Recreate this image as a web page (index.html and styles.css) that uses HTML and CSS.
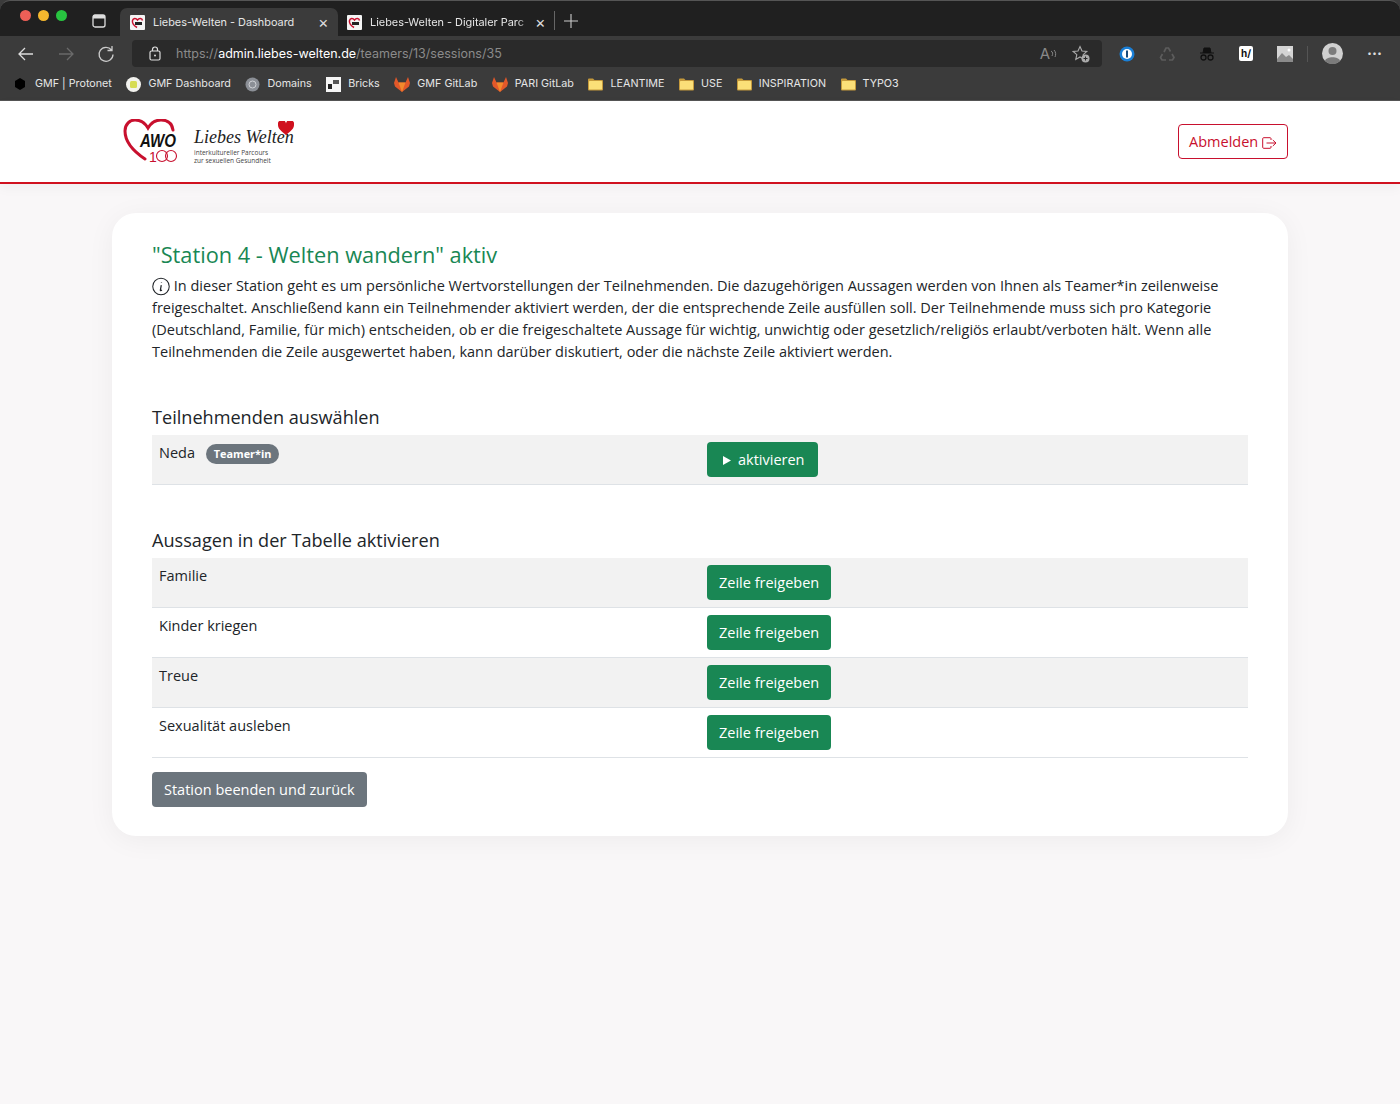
FILE: index.html
```html
<!DOCTYPE html>
<html lang="de">
<head>
    <meta charset="UTF-8">
    <meta name="viewport" content="width=device-width, initial-scale=1.0">
    <title>Liebes-Welten - Dashboard</title>
    <link rel="stylesheet" href="styles.css">
</head>
<body>

    <!-- Browser chrome -->
    <div class="browser">
        <div class="tabstrip">
            <div class="traffic">
                <span class="dot dot-red"></span>
                <span class="dot dot-yellow"></span>
                <span class="dot dot-green"></span>
            </div>
            <svg class="tab-toggle" width="14" height="14" viewBox="0 0 14 14"><rect x="1" y="1" width="12" height="12" rx="2" fill="none" stroke="#ddd" stroke-width="1.3"/><rect x="1" y="1" width="12" height="3.5" fill="#ddd"/></svg>
            <div class="tab tab-active">
                <svg class="favicon" width="15" height="15" viewBox="0 0 15 15"><rect width="15" height="15" rx="1" fill="#f4f4f4"/><path d="M7 12.5C3 10 2 7.5 2.5 5.5 3.2 3 6 3 7.500 5 9 3 12 3 12.500 5.500" fill="none" stroke="#c8102e" stroke-width="1.500"/><rect x="5" y="7" width="7" height="3" fill="#222"/></svg>
                <span class="tab-title">Liebes-Welten - Dashboard</span>
                <span class="tab-close">×</span>
            </div>
            <div class="tab">
                <svg class="favicon" width="15" height="15" viewBox="0 0 15 15"><rect width="15" height="15" rx="1" fill="#f4f4f4"/><path d="M7 12.5C3 10 2 7.5 2.5 5.5 3.2 3 6 3 7.500 5 9 3 12 3 12.500 5.500" fill="none" stroke="#c8102e" stroke-width="1.500"/><rect x="5" y="7" width="7" height="3" fill="#222"/></svg>
                <span class="tab-title tab-title-cut">Liebes-Welten - Digitaler Parc</span>
                <span class="tab-close">×</span>
            </div>
            <span class="tab-sep"></span>
            <svg class="tab-new" width="14" height="14" viewBox="0 0 14 14"><path d="M7 0v14M0 7h14" stroke="#ccc" stroke-width="1.100"/></svg>
        </div>

        <div class="toolbar">
            <svg class="tool-btn" width="18" height="18" viewBox="0 0 18 18"><path d="M16 9H2M8 3 2 9l6 6" fill="none" stroke="#ddd" stroke-width="1.300"/></svg>
            <svg class="tool-btn" width="18" height="18" viewBox="0 0 18 18"><path d="M2 9h14M10 3l6 6-6 6" fill="none" stroke="#6a6a6a" stroke-width="1.300"/></svg>
            <svg class="tool-btn" width="18" height="18" viewBox="0 0 18 18"><path d="M14.500 5A7 7 0 1 0 16 9.500M15 1v4.500h-4.500" fill="none" stroke="#ccc" stroke-width="1.300"/></svg>
            <div class="urlbar">
                <svg class="url-lock" width="12" height="15" viewBox="0 0 12 15"><rect x="1" y="5" width="10" height="9" rx="1.500" fill="none" stroke="#ddd" stroke-width="1.200"/><path d="M3.500 5V3.500a2.500 2.500 0 0 1 5 0V5" fill="none" stroke="#ddd" stroke-width="1.200"/><circle cx="6" cy="9.500" r="1" fill="#ddd"/></svg>
                <span class="url"><span class="url-dim">https://</span>admin.liebes-welten.de<span class="url-dim">/teamers/13/sessions/35</span></span>
                <span class="url-aloud">A<svg width="7" height="9" viewBox="0 0 7 9"><path d="M1 1c2 1 2 3 1 5M4 0c2 2 2 5 1 7" fill="none" stroke="#888"/></svg></span>
                <svg class="url-fav" width="18" height="18" viewBox="0 0 18 18"><path d="M8 1.500l2 4.500 4.800.5-3.600 3.200 1 4.800-4.200-2.500-4.200 2.500 1-4.800L1.200 6.500 6 6z" fill="none" stroke="#aaa" stroke-width="1.100"/><circle cx="13.500" cy="13.500" r="4" fill="#aaa"/><path d="M13.500 11.500v4M11.500 13.500h4" stroke="#2a2a2a"/></svg>
            </div>
            <div class="extensions">
                <svg width="16" height="16" viewBox="0 0 16 16"><circle cx="8" cy="8" r="7.500" fill="#1a7fd6"/><circle cx="8" cy="8" r="5" fill="#fff"/><rect x="7" y="4.500" width="2" height="7" fill="#174a7c"/></svg>
                <svg width="16" height="16" viewBox="0 0 16 16"><path d="M5 6l2-4h2.500l2 3.500M13 8l2 3.500-1.500 2.500H10M7 14H3l-1.500-2.500L3.500 8" fill="none" stroke="#5c5c5c" stroke-width="1.700"/></svg>
                <svg width="16" height="16" viewBox="0 0 16 16"><path d="M1 7h14M4 7l1-5h6l1 5" fill="#111" stroke="#111"/><circle cx="4.500" cy="11.500" r="2.500" fill="none" stroke="#111" stroke-width="1.300"/><circle cx="11.500" cy="11.500" r="2.500" fill="none" stroke="#111" stroke-width="1.300"/></svg>
                <span class="ext-h">h/</span>
                <svg width="16" height="16" viewBox="0 0 16 16"><rect width="16" height="16" fill="#d5d5d5"/><path d="M0 13l5-6 4 4 3-2 4 4v3H0z" fill="#8b8b8b"/><circle cx="12" cy="4" r="1.500" fill="#fff"/></svg>
                <span class="ext-sep"></span>
                <svg class="avatar" width="21" height="21" viewBox="0 0 21 21"><circle cx="10.500" cy="10.500" r="10.500" fill="#d0d0d0"/><circle cx="10.500" cy="8" r="4" fill="#7b7b7b"/><path d="M3 18c1-5 14-5 15 0a10.500 10.500 0 0 1-15 0z" fill="#7b7b7b"/></svg>
                <span class="ext-more">···</span>
            </div>
        </div>

        <div class="bookmarks">
            <a class="bookmark bookmark-first"><svg width="12" height="14" viewBox="0 0 12 14"><path d="M6 1l5 3v6l-5 3-5-3V4z" fill="#000"/></svg>GMF | Protonet</a>
            <a class="bookmark"><svg width="15" height="15" viewBox="0 0 15 15"><circle cx="7.500" cy="7.500" r="7.500" fill="#f2f2ee"/><rect x="4" y="4" width="7" height="7" rx="1.500" fill="#d6dc55"/></svg>GMF Dashboard</a>
            <a class="bookmark"><svg width="15" height="15" viewBox="0 0 15 15"><circle cx="7.500" cy="7.500" r="7" fill="#8b8f96"/><circle cx="7.500" cy="7.500" r="3.500" fill="none" stroke="#d0d2d6"/></svg>Domains</a>
            <a class="bookmark"><svg width="15" height="15" viewBox="0 0 15 15"><rect width="15" height="15" fill="#f5f5f5"/><rect x="2" y="7" width="4" height="5" fill="#222"/><rect x="7" y="3" width="6" height="4" fill="#555"/></svg>Bricks</a>
            <a class="bookmark"><svg width="16" height="15" viewBox="0 0 16 15"><path d="M8 15 1 9.500 0 6l2-6 2.500 5.500h7L14 0l2 6-1 3.500z" fill="#e2582a"/><path d="M8 15 4.500 5.500h7z" fill="#f38a2c"/></svg>GMF GitLab</a>
            <a class="bookmark"><svg width="16" height="15" viewBox="0 0 16 15"><path d="M8 15 1 9.500 0 6l2-6 2.500 5.500h7L14 0l2 6-1 3.500z" fill="#e2582a"/><path d="M8 15 4.500 5.500h7z" fill="#f38a2c"/></svg>PARI GitLab</a>
            <a class="bookmark"><svg width="15" height="13" viewBox="0 .5 15 13"><use href="#folder"/></svg>LEANTIME</a>
            <a class="bookmark"><svg width="15" height="13" viewBox="0 .5 15 13"><use href="#folder"/></svg>USE</a>
            <a class="bookmark"><svg width="15" height="13" viewBox="0 .5 15 13"><use href="#folder"/></svg>INSPIRATION</a>
            <a class="bookmark"><svg width="15" height="13" viewBox="0 .5 15 13"><use href="#folder"/></svg>TYPO3</a>
        </div>
        <svg class="defs" width="0" height="0"><defs><g id="folder"><path d="M0 2a1 1 0 0 1 1-1h4l1.500 1.500H14a1 1 0 0 1 1 1V12a1 1 0 0 1-1 1H1a1 1 0 0 1-1-1z" fill="#c59a3c"/><rect x="1" y="3.500" width="13" height="8.500" rx=".5" fill="#fbdf78"/></g></defs></svg>
    </div>

    <!-- Site header -->
    <header class="site-header">
        <div class="logo">
            <svg class="logo-awo" width="56" height="46" viewBox="0 0 56 46">
                <path d="M22 40C10 32 2 23 2 12 2 5 7 1 12 1c6 0 10 3 13 8 3-5 8-8 13-8 6 0 11 3 12 10" fill="none" stroke="#c8102e" stroke-width="3" stroke-linecap="round"/>
                <text class="awo-text" transform="translate(17 28) scale(.84 1)">AWO</text>
                <text class="awo-num" x="26" y="43">1</text>
                <circle cx="39" cy="37" r="5.500" fill="none" stroke="#c8102e" stroke-width="1.100"/>
                <circle cx="48" cy="37" r="5.500" fill="none" stroke="#c8102e" stroke-width="1.100"/>
            </svg>
            <div class="logo-text">
                <svg class="logo-heart" width="16" height="14" viewBox="0 0 16 14"><path d="M8 14C3 10 0 7.500 0 4a4 4 0 0 1 8-1.500A4 4 0 0 1 16 4c0 3.500-3 6-8 10z" fill="#d0111f"/></svg>
                <div class="logo-script">Liebes Welten</div>
                <div class="logo-sub">interkultureller Parcours<br>zur sexuellen Gesundheit</div>
            </div>
        </div>
        <a class="btn btn-outline-red">Abmelden
            <svg width="15" height="12" viewBox="0 0 15 12"><path d="M9 3V1.500A1 1 0 0 0 8 .7H1.700a1 1 0 0 0-1 1v8.600a1 1 0 0 0 1 1H8a1 1 0 0 0 1-1V9M4.500 6h9.500M10.800 3l3.200 3-3.200 3" fill="none" stroke="#c8102e" stroke-width="1"/></svg>
        </a>
    </header>

    <main class="card">
        <h1 class="station-title">"Station 4 - Welten wandern" aktiv</h1>
        <p class="intro">
            <svg class="info-icon" width="18" height="19" viewBox="0 0 19 19"><circle cx="9.500" cy="9.500" r="8.700" fill="none" stroke="#212529" stroke-width="1.100"/><path d="M10 5.200v.6M9.800 8 8.800 13.500c0 .5.700.5 1.700-.3" fill="none" stroke="#212529" stroke-width="1.300"/></svg>
            In dieser Station geht es um persönliche Wertvorstellungen der Teilnehmenden. Die dazugehörigen Aussagen werden von Ihnen als Teamer*in zeilenweise freigeschaltet. Anschließend kann ein Teilnehmender aktiviert werden, der die entsprechende Zeile ausfüllen soll. Der Teilnehmende muss sich pro Kategorie (Deutschland, Familie, für mich) entscheiden, ob er die freigeschaltete Aussage für wichtig, unwichtig oder gesetzlich/religiös erlaubt/verboten hält. Wenn alle Teilnehmenden die Zeile ausgewertet haben, kann darüber diskutiert, oder die nächste Zeile aktiviert werden.
        </p>

        <h2 class="section-title section-first">Teilnehmenden auswählen</h2>
        <div class="rows">
            <div class="row">
                <div class="cell">Neda <span class="badge">Teamer*in</span></div>
                <div class="cell"><a class="btn btn-green btn-activate"><svg width="8" height="9" viewBox="0 0 8 9"><path d="M0 0l8 4.500-8 4.500z" fill="#fff"/></svg>aktivieren</a></div>
            </div>
        </div>

        <h2 class="section-title section-second">Aussagen in der Tabelle aktivieren</h2>
        <div class="rows">
            <div class="row">
                <div class="cell">Familie</div>
                <div class="cell"><a class="btn btn-green">Zeile freigeben</a></div>
            </div>
            <div class="row">
                <div class="cell">Kinder kriegen</div>
                <div class="cell"><a class="btn btn-green">Zeile freigeben</a></div>
            </div>
            <div class="row">
                <div class="cell">Treue</div>
                <div class="cell"><a class="btn btn-green">Zeile freigeben</a></div>
            </div>
            <div class="row">
                <div class="cell">Sexualität ausleben</div>
                <div class="cell"><a class="btn btn-green">Zeile freigeben</a></div>
            </div>
        </div>

        <a class="btn btn-grey">Station beenden und zurück</a>
    </main>

</body>
</html>
```

FILE: styles.css
```css
body {
    font-family: "Open Sans", sans-serif;
    font-size: 14.5px;
    line-height: 22px;
    color: #212529;
    margin: 0;
    background-color: #f9f7f8;
    height: 1104px;
    overflow: hidden;
}

/* Browser chrome */
.browser {
    height: 100px;
    background-color: #3b3b3b;
    font-family: Inter, "Liberation Sans", sans-serif;
    color: #e6e6e6;
    border-bottom: 1px solid #555;
}

.tabstrip {
    display: flex;
    align-items: flex-end;
    height: 36px;
    padding-left: 20px;
    background-color: #202020;
    border-top: 1px solid #555;
    border-radius: 10px 10px 0 0;
    box-sizing: border-box;
}

.traffic {
    display: flex;
    gap: 7px;
    align-self: center;
    margin-right: 25px;
    margin-top: -6px;
}

.dot {
    width: 11px;
    height: 11px;
    border-radius: 50%;
}

.dot-red { background-color: #ed5f57; }
.dot-yellow { background-color: #f5b82e; }
.dot-green { background-color: #28c440; }

.tab-toggle {
    align-self: center;
    margin-right: 14px;
    margin-top: 4px;
}

.tab {
    display: flex;
    align-items: center;
    height: 28px;
    width: 218px;
    padding: 0 0 0 10px;
    box-sizing: border-box;
    font-size: 10.900px;
}

.tab-active {
    background-color: #3b3b3b;
    border-radius: 7px 7px 0 0;
}

.tab + .tab {
    width: 216px;
    padding-left: 9px;
}

.favicon {
    margin-right: 8px;
    flex-shrink: 0;
}

.tab-title {
    width: 163px;
    white-space: nowrap;
}

.tab-title-cut {
    width: 163px;
    -webkit-mask-image: linear-gradient(to right, #000 90%, transparent 100%);
    mask-image: linear-gradient(to right, #000 90%, transparent 100%);
}

.tab-close {
    font-size: 16px;
    color: #ddd;
    margin-left: 2px;
}

.tab-sep {
    width: 1px;
    height: 19px;
    background-color: #666;
    align-self: center;
    margin-top: 4px;
    margin-right: 9px;
}

.tab-new {
    align-self: center;
    margin-top: 4px;
}

.toolbar {
    display: flex;
    align-items: center;
    height: 35px;
    padding-left: 17px;
}

.tool-btn {
    margin-right: 22px;
}

.tool-btn:nth-child(3) {
    margin-right: 17px;
}

.urlbar {
    display: flex;
    align-items: center;
    width: 970px;
    height: 27px;
    background-color: #2a2a2a;
    border-radius: 4px;
    padding: 0 12px 0 17px;
    box-sizing: border-box;
    font-size: 12.5px;
}

.url-lock {
    margin-right: 15px;
}

.url {
    flex: 1;
    color: #fff;
}

.url-dim {
    color: #8b8b8b;
}

.url-aloud {
    color: #888;
    font-size: 15px;
    margin-right: 15px;
}

.extensions {
    display: flex;
    align-items: center;
    gap: 24px;
    margin-left: 17px;
}

.ext-h {
    width: 14px;
    height: 15px;
    background-color: #fff;
    color: #111;
    font-size: 10px;
    font-weight: bold;
    line-height: 15px;
    text-align: center;
    border-radius: 2px;
}

.ext-sep {
    width: 1px;
    height: 16px;
    background-color: #555;
    margin: 0 -10px;
}

.ext-more {
    font-size: 15px;
    font-weight: bold;
    color: #ddd;
}

.bookmarks {
    display: flex;
    align-items: center;
    height: 26px;
    padding-left: 14px;
    gap: 14.500px;
    font-size: 10.750px;
}

.bookmark {
    display: flex;
    align-items: center;
    gap: 7px;
    white-space: nowrap;
}

.bookmark-first {
    gap: 9px;
}

.defs {
    display: block;
    position: absolute;
}

/* Site header */
.site-header {
    display: flex;
    justify-content: space-between;
    align-items: center;
    height: 81px;
    padding: 0 112px 0 123px;
    background-color: #fff;
    border-bottom: 2px solid #d0111f;
    box-shadow: 0 4px 12px rgba(0, 0, 0, 0.04);
}

.logo {
    display: flex;
    align-items: center;
    gap: 15px;
}

.logo-awo text {
    fill: #c8102e;
}

.logo-awo .awo-text {
    fill: #111;
    font-family: "Liberation Sans", Arial, sans-serif;
    font-size: 18px;
    font-weight: bold;
    font-style: italic;
}

.logo-awo .awo-num {
    font-family: "Liberation Sans", Arial, sans-serif;
    font-size: 14px;
}

.logo-text {
    position: relative;
    width: 100px;
    padding-top: 8px;
}

.logo-heart {
    position: absolute;
    top: 2px;
    right: 0;
}

.logo-script {
    font-family: "Liberation Serif", serif;
    font-style: italic;
    font-size: 18px;
    line-height: 20px;
    color: #222;
    white-space: nowrap;
}

.logo-sub {
    font-size: 6.500px;
    line-height: 7.500px;
    color: #444;
    white-space: nowrap;
    margin-top: 2px;
}

/* Buttons */
.btn {
    display: inline-block;
    font-size: 14.5px;
    line-height: 22px;
    padding: 5.500px 11px;
    border: 1px solid transparent;
    border-radius: 4px;
    white-space: nowrap;
}

.btn-outline-red {
    color: #c8102e;
    border-color: #c8102e;
    padding-right: 10px;
    padding-left: 10.500px;
}

.btn-outline-red svg {
    vertical-align: -2px;
}

.btn-green {
    background-color: #198754;
    color: #fff;
}

.btn-activate {
    padding-right: 12px;
}

.btn-activate svg {
    margin-left: 4px;
    margin-right: 7px;
}

.btn-grey {
    background-color: #6c757d;
    color: #fff;
    margin-top: 14px;
}

/* Card */
.card {
    width: 1176px;
    margin: 29px auto 0;
    padding: 28px 40px 29px;
    background-color: #fff;
    border-radius: 24px;
    box-shadow: 0 4px 28px rgba(0, 0, 0, 0.05);
    box-sizing: border-box;
}

.station-title {
    font-size: 21.750px;
    font-weight: 400;
    line-height: 27px;
    color: #198754;
    margin: 0 0 7px;
}

.intro {
    margin: 0;
}

.info-icon {
    vertical-align: -5px;
}

.section-title {
    font-size: 18.125px;
    font-weight: 400;
    line-height: 23px;
    margin: 0 0 6px;
}

.section-first {
    margin-top: 43px;
}

.section-second {
    margin-top: 44px;
}

.row {
    display: grid;
    grid-template-columns: 1fr 1fr;
    height: 50px;
    box-sizing: border-box;
    padding-top: 7px;
    border-bottom: 1px solid #dee2e6;
}

.row:nth-child(odd) {
    background-color: #f2f2f2;
}

.cell {
    padding: 0 7px;
}

.badge {
    display: inline-block;
    margin-left: 7px;
    padding: 0 8px;
    border-radius: 10px;
    background-color: #6c757d;
    color: #fff;
    font-size: 10.875px;
    font-weight: 700;
    line-height: 20px;
    vertical-align: 0;
}
```
